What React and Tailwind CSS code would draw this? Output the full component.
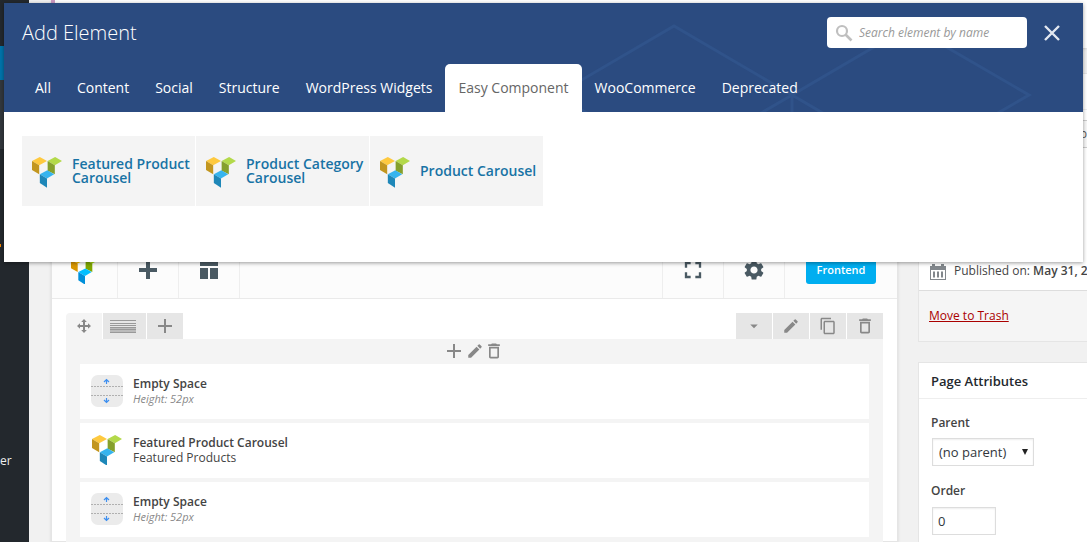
import React from "react";
import {
  MdAdd,
  MdArrowDropDown,
  MdContentCopy,
  MdDeleteOutline,
  MdEdit,
  MdFullscreen,
  MdSettings,
} from "react-icons/md";

const tabs = [
  "All",
  "Content",
  "Social",
  "Structure",
  "WordPress Widgets",
  "Easy Component",
  "WooCommerce",
  "Deprecated",
];

const components = ["Featured Product Carousel", "Product Category Carousel", "Product Carousel"];

const elements = [
  { kind: "space", title: "Empty Space", detail: "Height: 52px" },
  { kind: "carousel", title: "Featured Product Carousel", detail: "Featured Products" },
  { kind: "space", title: "Empty Space", detail: "Height: 52px" },
];

function CubesLogo({ className = "" }) {
  return (
    <svg viewBox="0 0 92 94" className={className} aria-hidden="true">
      <path fill="#fec93f" d="M0 12 24 0 46 12 22 25Z" />
      <path fill="#c2961f" d="M0 12 22 25V53L0 40Z" />
      <path fill="#b3d94a" d="M48 12 71 0 92 12 70 25Z" />
      <path fill="#85a02c" d="M48 12 70 25V53L48 42Z" />
      <path fill="#36b4ee" d="M24 53 47 41 68 53 46 66Z" />
      <path fill="#1e87b8" d="M24 53 46 66V94L24 80Z" />
    </svg>
  );
}

function SpaceIcon() {
  return (
    <svg viewBox="0 0 32 32" className="size-8" fill="none" aria-hidden="true">
      <rect width="32" height="32" rx="7" fill="#ebebeb" />
      <path d="M0 11.5H32M0 20.5H32" stroke="#b0b0b0" strokeDasharray="2 1" />
      <path d="M15.5 9V4.5M13 7 15.5 4.5 18 7M15.5 23V27.5M13 25 15.5 27.5 18 25" stroke="#3d8ff0" strokeWidth="1.2" />
    </svg>
  );
}

function MoveIcon() {
  return (
    <svg viewBox="0 0 14 14" className="size-3.5" fill="#888" aria-hidden="true">
      <path d="M6 3H4.200L7 0l2.800 3H8v3h3V4.200L14 7l-3 2.800V8H8v3h1.800L7 14l-2.800-3H6V8H3v1.800L0 7l3-2.800V6h3z" />
    </svg>
  );
}

function LayoutLinesIcon() {
  return (
    <svg viewBox="0 0 26 13" className="h-[13px] w-[26px]" aria-hidden="true">
      <path d="M0 7H26V13H0Z" fill="#bbb" />
      <path d="M0 .5H26M0 3.500H26M0 5.500H26M0 7.500H26M0 9.500H26M0 12.500H26" stroke="#999" />
    </svg>
  );
}

function TemplateIcon() {
  return (
    <svg viewBox="0 0 18 18" className="size-[18px]" fill="#4a5a63" aria-hidden="true">
      <path d="M0 0H18V5H0ZM0 7H8V18H0ZM10 7H18V18H10Z" />
    </svg>
  );
}

function CalendarIcon() {
  return (
    <svg viewBox="0 0 16 17" className="h-[17px] w-4 shrink-0" aria-hidden="true">
      <path fill="#82878c" fillRule="evenodd" d="M0 3H2V1H5V3H11V1H14V3H16V17H0ZM1 7V16H15V7Z" />
      <path d="M4 8.500V14.500M8 8.500V14.500M12 8.500V14.500" stroke="#82878c" strokeWidth="2" />
    </svg>
  );
}

function Modal() {
  return (
    <section
      role="dialog"
      aria-label="Add Element"
      className="absolute inset-x-1 top-[3px] min-h-[259px] bg-white shadow-[0_1px_4px_rgba(0,0,0,0.4)]"
    >
      <header className="relative overflow-hidden bg-[#2b4b80]">
        <svg
          viewBox="578 3 505 109"
          className="absolute top-0 right-0 h-[109px] w-[505px]"
          fill="none"
          stroke="#30538a"
          strokeWidth="3"
          aria-hidden="true"
        >
          <path d="M556 95 674 26 792 95 910 26 1029 95 910 164M674 164 792 95V180M792 95 910 164M556 95 674 164" />
        </svg>
        <div className="relative flex h-[59px] items-center px-[18px]">
          <h1 className="flex-1 text-[20px] font-light text-white">Add Element</h1>
          <div className="flex h-[31px] w-[200px] items-center rounded bg-white pl-2">
            <svg viewBox="0 0 18 18" className="size-[18px] shrink-0" fill="none" stroke="#bfbfbf" aria-hidden="true">
              <circle cx="7" cy="7" r="5" strokeWidth="2.200" />
              <path d="M10.500 10.500 16.500 16.500" strokeWidth="2.600" />
            </svg>
            <input
              type="search"
              aria-label="Search element by name"
              placeholder="Search element by name"
              className="ml-[6px] h-full w-full min-w-0 bg-transparent text-[12px] italic outline-none placeholder:text-[#999]"
            />
          </div>
          <button type="button" aria-label="Close" className="ml-3 flex size-[26px] items-center justify-center">
            <svg viewBox="0 0 16 16" className="size-4" fill="none" stroke="#e3e8f0" strokeWidth="2.400">
              <path d="M1 1 15 15M15 1 1 15" />
            </svg>
          </button>
        </div>
        <nav className="relative flex h-[50px] items-end pl-[18px]">
          {tabs.map((tab) => (
            <button
              key={tab}
              type="button"
              className={
                tab === "Easy Component"
                  ? "h-12 rounded-t-[5px] bg-white px-[13px] pb-[2px] text-[14px] whitespace-nowrap text-[#666]"
                  : "h-12 px-[13px] pb-[2px] text-[14px] whitespace-nowrap text-white"
              }
            >
              {tab}
            </button>
          ))}
        </nav>
      </header>
      <ul className="flex flex-wrap gap-px px-[18px] pt-6">
        {components.map((name) => (
          <li key={name} className="w-[173px]">
            <a
              href="#add"
              className="flex h-[70px] items-center gap-[10px] bg-[#f4f4f4] pl-[10px] text-[14px] leading-[14px] font-semibold text-[#1873a5]"
            >
              <CubesLogo className="mt-[3px] w-[30px] shrink-0" />
              <span>{name}</span>
            </a>
          </li>
        ))}
      </ul>
    </section>
  );
}

function EditorToolbar() {
  const cell = "flex w-[61px] items-center justify-center border-[#eee] pt-px text-[#4a5a63]";
  return (
    <div className="flex h-[58px] border-b border-[#eaeaea] bg-[#fcfcfc]">
      <div className="flex w-[66px] items-center justify-center border-r border-[#eee] pt-px">
        <CubesLogo className="w-7 saturate-150" />
      </div>
      <button type="button" aria-label="Add element" className={`${cell} border-r`}>
        <svg viewBox="0 0 18 18" className="size-[18px]" fill="currentColor">
          <path d="M7 0h4v7h7v4h-7v7H7v-7H0V7h7z" />
        </svg>
      </button>
      <button type="button" aria-label="Templates" className={`${cell} border-r`}>
        <TemplateIcon />
      </button>
      <div className="flex-1" />
      <button type="button" aria-label="Full screen" className={`${cell} border-l`}>
        <MdFullscreen className="size-7" />
      </button>
      <button type="button" aria-label="Settings" className={`${cell} border-l`}>
        <MdSettings className="size-6" />
      </button>
      <div className="flex items-center border-l border-[#eee] px-[21px]">
        <button type="button" className="h-7 w-[70px] rounded-[3px] bg-[#00aef0] pt-px text-[11px] font-semibold text-white">
          Frontend
        </button>
      </div>
    </div>
  );
}

function Editor() {
  const tool = "flex h-[26px] w-9 items-center justify-center bg-[#e6e6e6]";
  return (
    <main className="min-w-0 flex-1 border border-[#e5e5e5] bg-white pt-[167px] shadow-sm">
      <EditorToolbar />
      <div className="px-[14px] pt-[14px] text-[#888]">
        <div className="flex gap-px">
          <button type="button" aria-label="Move row" className="flex h-[26px] w-9 items-center justify-center rounded-tl bg-[#f4f4f4]">
            <MoveIcon />
          </button>
          <button type="button" aria-label="Row layout" className="flex h-[26px] w-[43px] items-center bg-[#e6e6e6] pl-[7px]">
            <LayoutLinesIcon />
          </button>
          <button type="button" aria-label="Add column" className={tool}>
            <MdAdd className="size-6" />
          </button>
          <div className="flex-1" />
          <button type="button" aria-label="Toggle row" className={tool}>
            <MdArrowDropDown className="size-[18px]" />
          </button>
          <button type="button" aria-label="Edit row" className={tool}>
            <MdEdit className="size-[18px]" />
          </button>
          <button type="button" aria-label="Clone row" className={tool}>
            <MdContentCopy className="size-[18px]" />
          </button>
          <button type="button" aria-label="Delete row" className={tool}>
            <MdDeleteOutline className="size-5" />
          </button>
        </div>
        <div className="bg-[#f4f4f4] px-[14px] pb-4">
          <div className="flex h-[25px] items-center justify-center pr-[3px] pb-[2px]">
            <button type="button" aria-label="Add to column">
              <MdAdd className="size-6" />
            </button>
            <button type="button" aria-label="Edit column">
              <MdEdit className="size-[18px]" />
            </button>
            <button type="button" aria-label="Delete column">
              <MdDeleteOutline className="size-5" />
            </button>
          </div>
          <div className="flex flex-col gap-1">
            {elements.map((item, i) => (
              <article key={i} className="flex h-[55px] items-center gap-[10px] bg-white pb-px pl-[11px] text-[#444]">
                {item.kind === "space" ? <SpaceIcon /> : <CubesLogo className="mr-px ml-px w-[30px]" />}
                <div>
                  <h2 className="text-[12px] leading-[15px] font-semibold">{item.title}</h2>
                  <p className={item.kind === "space" ? "text-[11px] leading-[15px] text-[#888] italic" : "text-[12px] leading-[15px]"}>
                    {item.detail}
                  </p>
                </div>
              </article>
            ))}
          </div>
        </div>
      </div>
    </main>
  );
}

function MetaBoxes() {
  return (
    <aside className="w-[169px] shrink-0 overflow-hidden text-[12px] text-[#444]">
      <section className="border border-r-0 border-[#e5e5e5] bg-white">
        <div className="h-9 border-b border-[#eee]" />
        <div className="flex justify-end pt-[10px]">
          <button type="button" className="h-7 border-y border-[#ccc] bg-[#f7f7f7] pl-3 text-[#555]">
            p
          </button>
        </div>
        <div className="flex h-[143px] items-end gap-2 border-b border-[#ddd] pb-[10px] pl-[11px] leading-[18px] whitespace-nowrap">
          <CalendarIcon />
          <span>
            Published on: <b className="font-semibold">May 31, 2</b>
          </span>
        </div>
        <div className="h-[50px] bg-[#f5f5f5] pt-4 pl-[10px] leading-[18px]">
          <a href="#trash" className="text-[#a00] underline">
            Move to Trash
          </a>
        </div>
      </section>
      <section className="mt-5 border border-r-0 border-[#e5e5e5] bg-white">
        <h2 className="flex h-9 items-center border-b border-[#eee] pt-[2px] pl-3 text-[13px] font-semibold text-[#23282d]">
          Page Attributes
        </h2>
        <div className="flex flex-col items-start pt-[15px] pb-6 pl-3 leading-[18px]">
          <label htmlFor="parent" className="font-semibold">
            Parent
          </label>
          <div className="relative mt-[6px] ml-px">
            <select
              id="parent"
              className="h-7 w-[102px] appearance-none border border-[#ddd] bg-white pl-[6px] text-[13px] text-[#32373c] shadow-[inset_0_1px_2px_rgba(0,0,0,0.07)]"
            >
              <option>(no parent)</option>
            </select>
            <svg viewBox="0 0 6 6" className="pointer-events-none absolute top-[11px] right-[6px] size-[6px]" fill="#222" aria-hidden="true">
              <path d="M0 0h6L3 6z" />
            </svg>
          </div>
          <label htmlFor="order" className="mt-4 font-semibold">
            Order
          </label>
          <input
            id="order"
            defaultValue="0"
            className="mt-[7px] ml-px h-7 w-16 border border-[#ddd] bg-white px-[5px] text-[13px] text-[#32373c] shadow-[inset_0_1px_2px_rgba(0,0,0,0.07)]"
          />
        </div>
      </section>
    </aside>
  );
}

export default function App() {
  return (
    <div className="relative flex h-screen overflow-hidden bg-[#f1f1f1] font-['Open_Sans','Noto_Sans',sans-serif]">
      <nav className="w-[29px] shrink-0 bg-[#23282d] text-[13px] leading-[18px] text-[#eee]">
        <div className="h-[46px]" />
        <div className="h-[34px] bg-[#0073aa]" />
        <div className="h-[69px] bg-[#32373c]" />
        <div className="flex h-[302px] items-end">
          <span className="mb-[204px] h-[3px] w-px bg-[#f18500]" />
        </div>
        <a href="#customizer" className="text-[12px]">er</a>
      </nav>
      <div className="flex min-w-0 flex-1 flex-col pl-[22px]">
        <div className="h-12 shrink-0 border-l-4 border-[#cc99c2] bg-white shadow-sm" />
        <div className="mt-[25px] flex min-h-0 flex-1 gap-5">
          <Editor />
          <MetaBoxes />
        </div>
      </div>
      <Modal />
    </div>
  );
}
